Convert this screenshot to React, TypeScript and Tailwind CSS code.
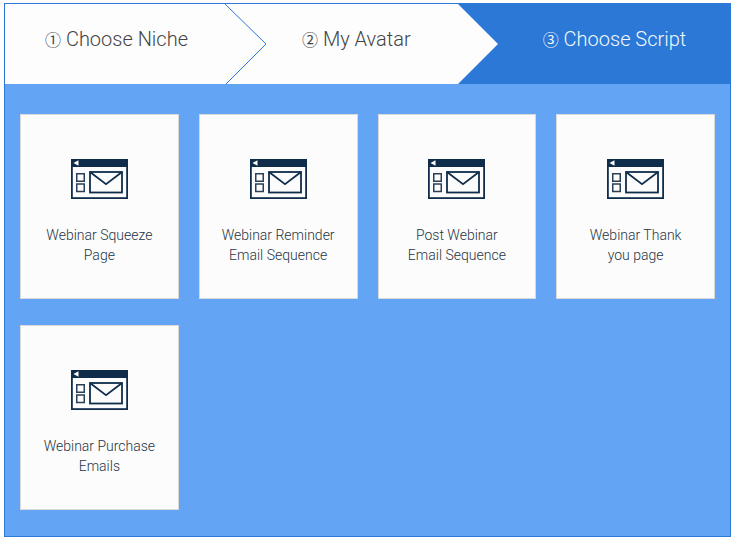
const cards = [
  ["Webinar Squeeze", "Page"],
  ["Webinar Reminder", "Email Sequence"],
  ["Post Webinar", "Email Sequence"],
  ["Webinar Thank", "you page"],
  ["Webinar Purchase", "Emails"],
]

function MailWindowIcon() {
  return (
    <svg width="57" height="40" viewBox="0 0 57 40" fill="none" className="block">
      <rect x="0.9" y="0.9" width="55.2" height="38.2" stroke="#0f2d4a" strokeWidth="1.8" />
      <rect x="0" y="0" width="57" height="8" fill="#0f2d4a" />
      <path d="M2.5 4 L7.5 1.2 V6.8 Z" fill="#fff" />
      <rect x="5.75" y="14.75" width="7.5" height="7.5" stroke="#2b3f55" strokeWidth="1.5" />
      <rect x="5.75" y="25" width="7.5" height="7.5" stroke="#2b3f55" strokeWidth="1.5" />
      <rect x="19" y="13" width="32" height="20.5" stroke="#0f2d4a" strokeWidth="1.8" />
      <path d="M19 13 L35 25.2 L51 13" stroke="#0f2d4a" strokeWidth="1.8" />
    </svg>
  )
}

function StepNumber({ glyph }: { glyph: string }) {
  return <span className="ml-[1px] font-['Noto_Sans_CJK_JP',sans-serif] text-[16px] font-normal">{glyph}</span>
}

export default function App() {
  return (
    <div className="min-h-screen bg-white font-['Roboto',sans-serif]">
      <div className="ml-[4px] pt-[3px] w-[727px]">
        <div className="h-[534px] border border-[#2b78d6] bg-[#63a4f4]">
          {/* Steps */}
          <div className="relative flex h-20 bg-[#2b78d6] font-light text-[20px] leading-7">
            <div className="flex w-[222px] items-center justify-center bg-[#fdfdfd] pb-[10px] text-[#444]">
              <div><StepNumber glyph="①" /> Choose Niche</div>
            </div>
            <div className="flex w-[271px] items-center bg-[#fdfdfd] pb-[10px] pl-[74px] text-[#444] [clip-path:polygon(0_0,231px_0,271px_40px,231px_100%,0_100%)]">
              <div><StepNumber glyph="②" /> My Avatar</div>
            </div>
            <div className="flex flex-1 items-center justify-center pb-[10px] text-[#f4f8fd]">
              <div><StepNumber glyph="③" /> Choose Script</div>
            </div>
            <svg width="44" height="80" viewBox="0 0 44 80" fill="none" className="absolute left-[220px] top-0">
              <path d="M0 0 L41 40 L1 80" stroke="#2b78d6" strokeWidth="1" />
            </svg>
          </div>

          {/* Script cards */}
          <div className="grid grid-cols-4 gap-x-5 gap-y-[26px] px-[15px] pt-[30px]">
            {cards.map((lines) => (
              <div
                key={lines[0]}
                className="flex h-[185px] flex-col items-center border border-[#d9d9d9] bg-[#fcfcfc] pt-[44px] text-center text-[14px] font-light leading-5 text-[#263445]"
              >
                <MailWindowIcon />
                <div className="mt-[26px]">
                  {lines[0]}
                  <br />
                  {lines[1]}
                </div>
              </div>
            ))}
          </div>
        </div>
      </div>
    </div>
  )
}
